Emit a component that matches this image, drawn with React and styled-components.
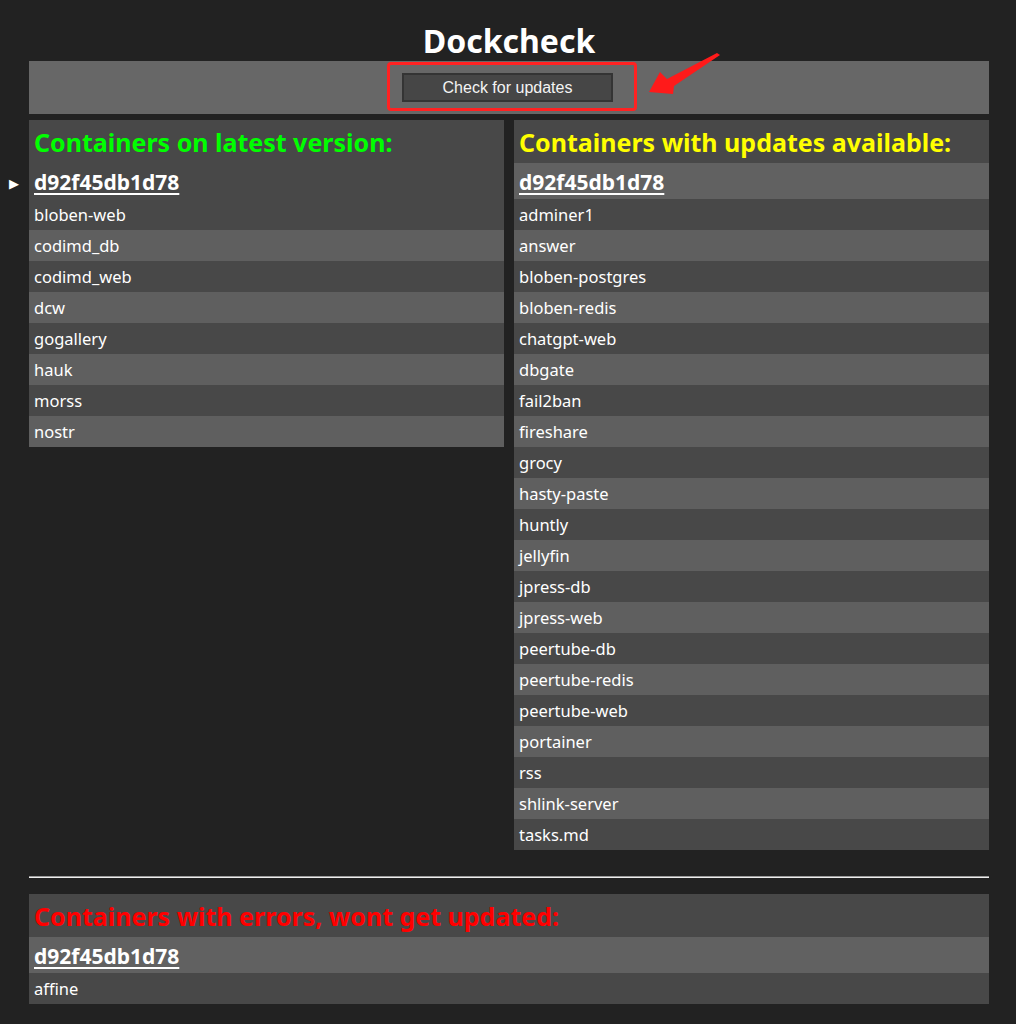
import React from "react";
import styled, { createGlobalStyle } from "styled-components";

const GlobalStyle = createGlobalStyle`
  body {
    margin: 0;
    background: #222222;
    color: #ffffff;
    font-family: "Noto Sans", "Open Sans", sans-serif;
  }
`;

const latest = ["bloben-web", "codimd_db", "codimd_web", "dcw", "gogallery", "hauk", "morss", "nostr"];

const updates = [
  "adminer1", "answer", "bloben-postgres", "bloben-redis", "chatgpt-web", "dbgate", "fail2ban",
  "fireshare", "grocy", "hasty-paste", "huntly", "jellyfin", "jpress-db", "jpress-web",
  "peertube-db", "peertube-redis", "peertube-web", "portainer", "rss", "shlink-server", "tasks.md"
];

const errors = ["affine"];

const HOST = "d92f45db1d78";

function ContainerList({ title, color, items, hostLight, marker }) {
  return (
    <Panel>
      <PanelTitle color={color}>{title}</PanelTitle>
      <HostRow light={hostLight} marker={marker}>
        <HostLink href="#">{HOST}</HostLink>
      </HostRow>
      <Rows>
        {items.map((name) => (
          <Row key={name}>{name}</Row>
        ))}
      </Rows>
    </Panel>
  );
}

export default function App() {
  return (
    <Page>
      <GlobalStyle />
      <Title>Dockcheck</Title>
      <TopBar>
        <ButtonWrap>
          <CheckButton>Check for updates</CheckButton>
          <Highlight />
        </ButtonWrap>
      </TopBar>
      <Columns>
        <ContainerList
          title="Containers on latest version:"
          color="#00ff00"
          items={latest}
          hostLight={false}
          marker
        />
        <ContainerList
          title="Containers with updates available:"
          color="#ffff00"
          items={updates}
          hostLight
        />
      </Columns>
      <Divider />
      <ContainerList
        title="Containers with errors, wont get updated:"
        color="#ff0000"
        items={errors}
        hostLight
      />
      <Arrow viewBox="0 0 90 60" width="90" height="60">
        <polygon points="71,3 74,5 28,36 27,44 3,42 14,22 21,29" fill="#ff1a1a" />
      </Arrow>
    </Page>
  );
}

const Page = styled.div`
  position: relative;
  width: 960px;
  margin: 0 auto;
  padding-top: 20px;
  padding-bottom: 20px;
  left: 1px;
`;

const Title = styled.h1`
  margin: 0;
  height: 41px;
  text-align: center;
  font-size: 32px;
  font-weight: 700;
  line-height: 41px;
  color: #ffffff;
`;

const TopBar = styled.div`
  display: flex;
  justify-content: center;
  align-items: center;
  height: 53px;
  background: #676767;
`;

const ButtonWrap = styled.div`
  position: relative;
  display: flex;
  margin-left: -3px;
`;

const CheckButton = styled.button`
  width: 211px;
  height: 29px;
  background: #464646;
  border: 2px solid #343434;
  color: #f4f4f4;
  font-family: "Liberation Sans", Arial, sans-serif;
  font-size: 16px;
  padding: 0;
  cursor: pointer;
`;

const Highlight = styled.div`
  position: absolute;
  left: -15px;
  right: -24px;
  top: -11px;
  bottom: -9px;
  border: 3px solid #ff2222;
  border-radius: 4px;
  pointer-events: none;
`;

const Arrow = styled.svg`
  position: absolute;
  left: 617px;
  top: 50px;
`;

const Columns = styled.div`
  display: grid;
  grid-template-columns: 1fr 1fr;
  gap: 10px;
  align-items: start;
  margin-top: 6px;
`;

const Panel = styled.section`
  background: #484848;
`;

const PanelTitle = styled.h2`
  margin: 0;
  height: 43px;
  padding: 0 5px;
  font-size: 25px;
  font-weight: 700;
  line-height: 45px;
  color: ${(p) => p.color};
  white-space: nowrap;
`;

const HostRow = styled.div`
  position: relative;
  height: 36px;
  padding: 0 5px;
  background: ${(p) => (p.light ? "#616161" : "#484848")};
  line-height: 38px;

  &::before {
    content: ${(p) => (p.marker ? '"▶"' : "none")};
    position: absolute;
    left: -20px;
    top: 1px;
    font-size: 13px;
    color: #ffffff;
  }
`;

const HostLink = styled.a`
  font-size: 21px;
  font-weight: 700;
  color: #ffffff;
  text-decoration: underline;
  text-underline-offset: 3px;
  text-decoration-thickness: 2px;
`;

const Rows = styled.div`
  display: flex;
  flex-direction: column;
`;

const Row = styled.div`
  height: 31px;
  padding: 0 5px;
  font-size: 16.5px;
  line-height: 31px;
  color: #ffffff;

  &:nth-child(even) {
    background: #5f5f5f;
  }
`;

const Divider = styled.hr`
  margin: 26px 0 16px;
  border: 0;
  border-top: 1px solid #9a9a9a;
  border-bottom: 1px solid #eeeeee;
  height: 0;
`;
